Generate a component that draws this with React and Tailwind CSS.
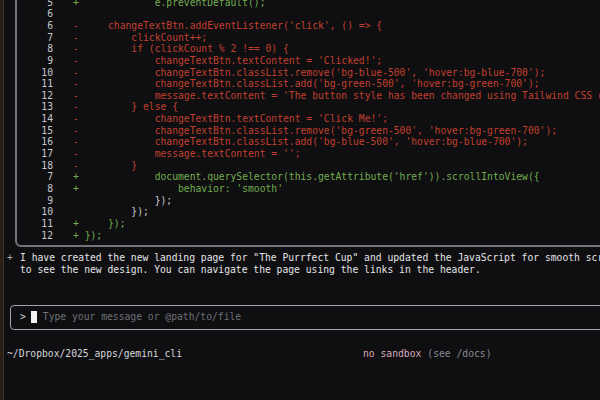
import React from "react";

const diffLines = [
  { n: "5", m: "+", code: "             e.preventDefault();" },
  { n: "6", m: " ", code: "" },
  { n: "6", m: "-", code: "     changeTextBtn.addEventListener('click', () => {" },
  { n: "7", m: "-", code: "         clickCount++;" },
  { n: "8", m: "-", code: "         if (clickCount % 2 !== 0) {" },
  { n: "9", m: "-", code: "             changeTextBtn.textContent = 'Clicked!';" },
  { n: "10", m: "-", code: "             changeTextBtn.classList.remove('bg-blue-500', 'hover:bg-blue-700');" },
  { n: "11", m: "-", code: "             changeTextBtn.classList.add('bg-green-500', 'hover:bg-green-700');" },
  { n: "12", m: "-", code: "             message.textContent = 'The button style has been changed using Tailwind CSS classes!';" },
  { n: "13", m: "-", code: "         } else {" },
  { n: "14", m: "-", code: "             changeTextBtn.textContent = 'Click Me!';" },
  { n: "15", m: "-", code: "             changeTextBtn.classList.remove('bg-green-500', 'hover:bg-green-700');" },
  { n: "16", m: "-", code: "             changeTextBtn.classList.add('bg-blue-500', 'hover:bg-blue-700');" },
  { n: "17", m: "-", code: "             message.textContent = '';" },
  { n: "18", m: "-", code: "         }" },
  { n: "7", m: "+", code: "             document.querySelector(this.getAttribute('href')).scrollIntoView({" },
  { n: "8", m: "+", code: "                 behavior: 'smooth'" },
  { n: "9", m: " ", code: "             });" },
  { n: "10", m: " ", code: "         });" },
  { n: "11", m: "+", code: "     });" },
  { n: "12", m: "+", code: " });" },
];

function DiffLine({ n, m, code }) {
  const color =
    m === "-" ? "text-[#c2402f]" : m === "+" ? "text-[#72ad4f]" : "text-[#c9c9cf]";
  return (
    <div className="flex h-[11.67px] items-center whitespace-nowrap">
      <span className="w-[36px] shrink-0 text-right text-[#c8c8ce]">{n}</span>
      <span className={`ml-[20px] shrink-0 whitespace-pre ${color}`}>
        {m}
        {code}
      </span>
    </div>
  );
}

export default function App() {
  return (
    <div
      className="flex h-[400px] w-[600px] overflow-hidden bg-[#0f0f11] text-[9.7px]"
      style={{ fontFamily: '"DejaVu Sans Mono", "Liberation Mono", monospace' }}
    >
      {/* window edge behind the terminal */}
      <div className="w-[4px] shrink-0 border-r border-[#3a3330] bg-[#2a1e16]" />

      <div className="min-w-0 flex-1 overflow-hidden">
        {/* diff box */}
        <div className="-mt-[6px] ml-[11px] w-[640px] rounded-md border-2 border-[#74747c] pb-[3px] pt-[1px]">
          {diffLines.map((l, i) => (
            <DiffLine key={i} {...l} />
          ))}
        </div>

        {/* reply */}
        <div className="mt-[5px] leading-[12px] text-[#e4e4e8]">
          <div className="flex whitespace-nowrap">
            <span className="ml-[3px] w-[13px] shrink-0 text-[#a8a8b0]">+</span>
            <span className="shrink-0">
              I have created the new landing page for "The Purrfect Cup" and updated the JavaScript for smooth scrolling.
            </span>
          </div>
          <div className="ml-[16px] whitespace-nowrap">
            to see the new design. You can navigate the page using the links in the header.
          </div>
        </div>

        {/* input */}
        <div className="ml-[6px] mt-[29px] flex h-[25px] w-[640px] items-center rounded-[4px] border-[1.5px] border-[#a3a3ab] pl-[9px]">
          <span className="text-[#d4d4da]">&gt;</span>
          <span className="ml-[5px] h-[12px] w-[6px] bg-[#f2f2f4]" />
          <span className="ml-[6px] text-[#6f6f78]">Type your message or @path/to/file</span>
        </div>

        {/* footer */}
        <div className="mt-[17px] flex whitespace-nowrap">
          <span className="ml-[3px] text-[#d6d6dc]">~/Dropbox/2025_apps/gemini_cli</span>
          <span className="ml-[181px] text-[#d9aab6]">no sandbox</span>
          <span className="ml-[6px] text-[#8a8a94]">(see /docs)</span>
        </div>
      </div>
    </div>
  );
}
